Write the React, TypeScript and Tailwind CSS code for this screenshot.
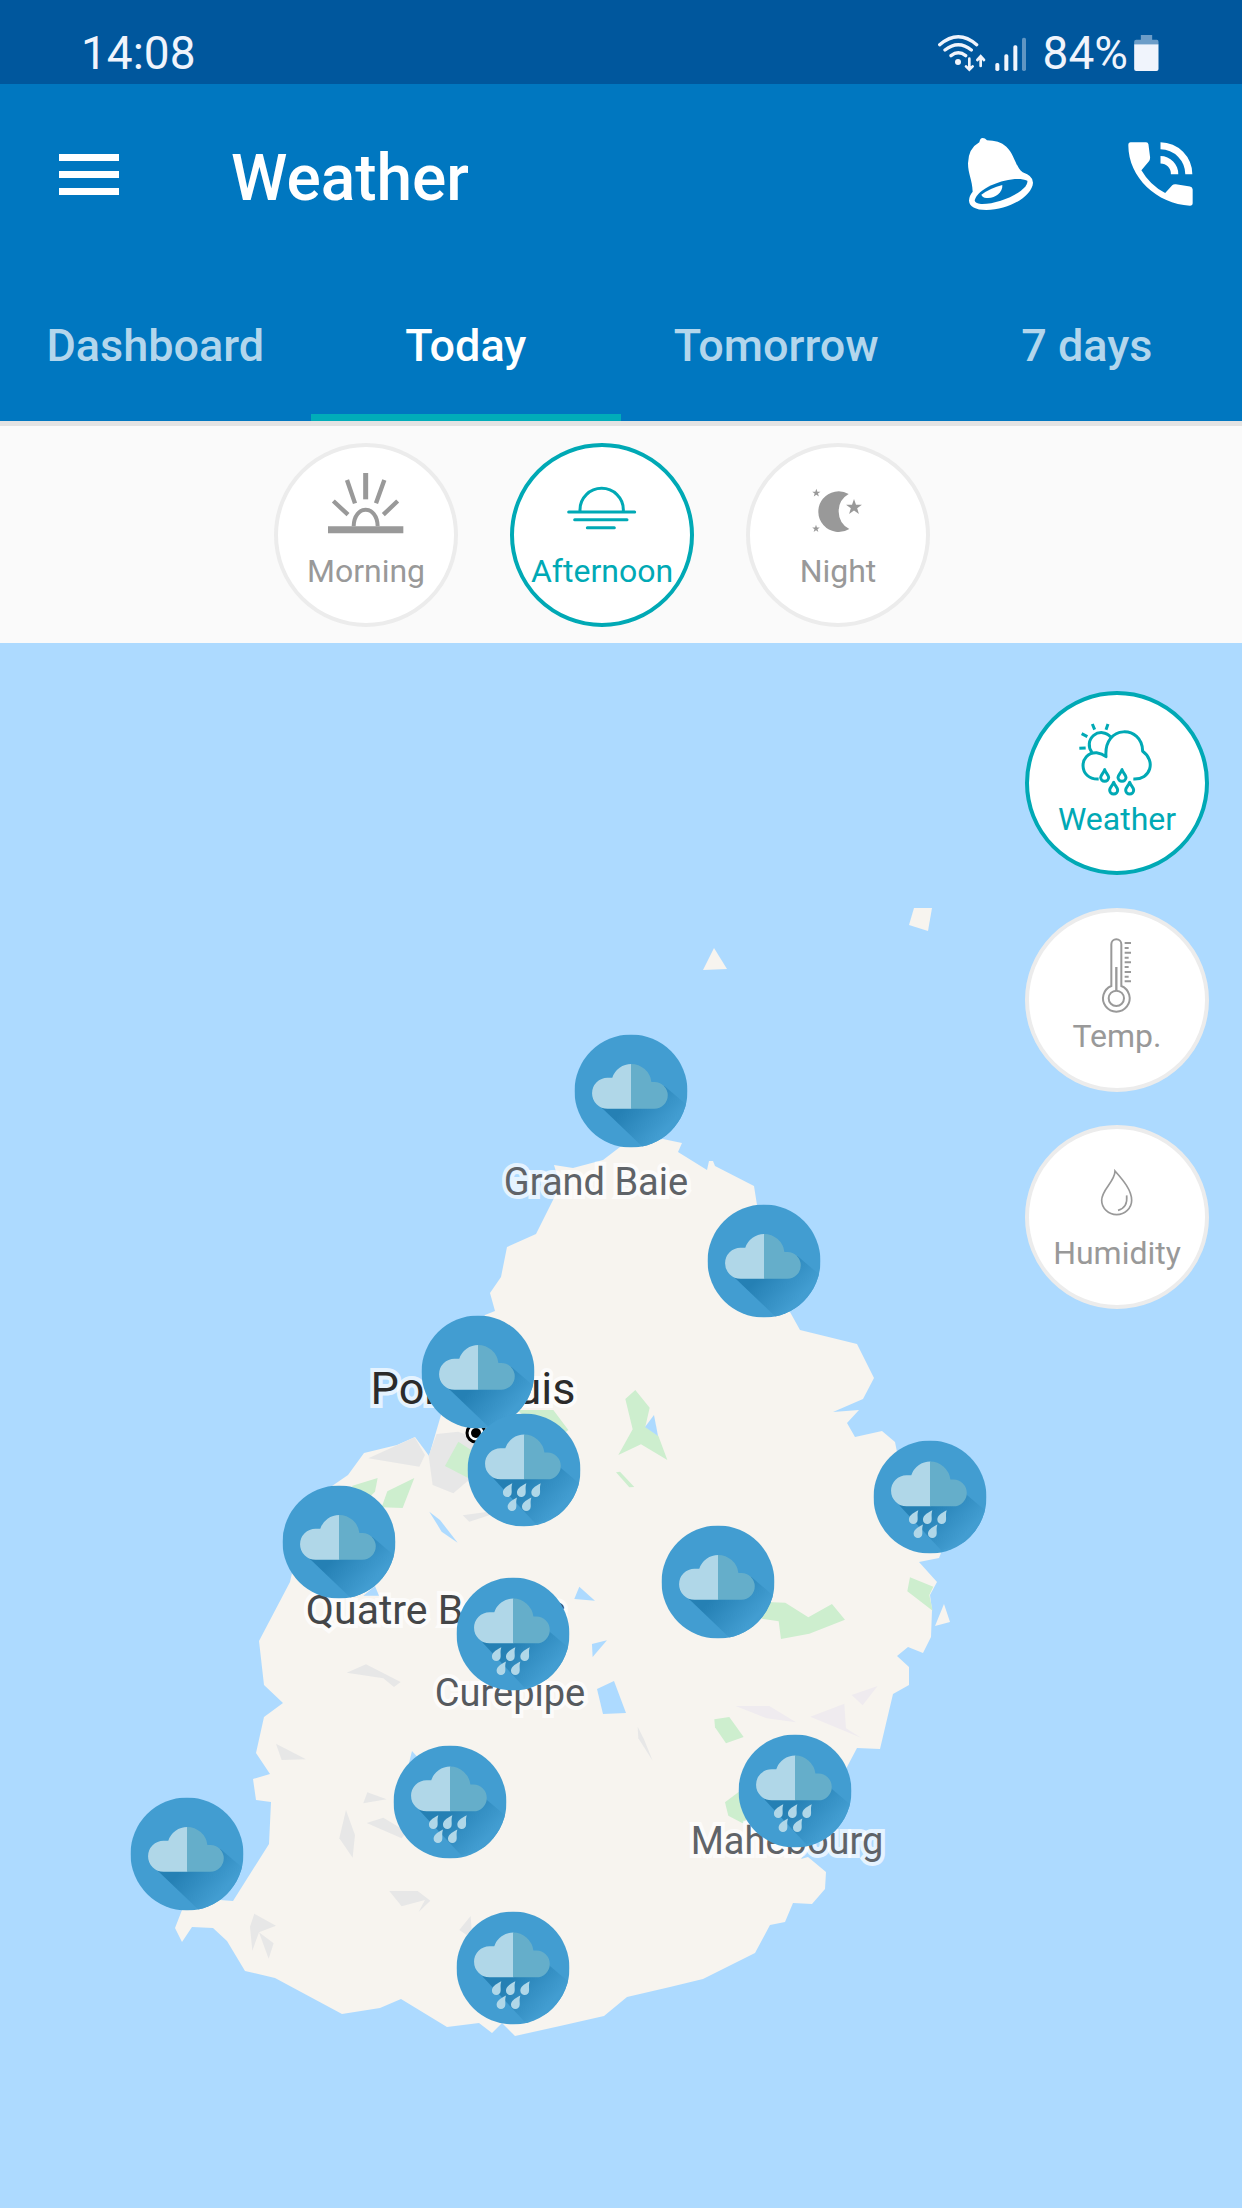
import { useState } from "react";
import type { ReactNode } from "react";
import clsx from "clsx";

type Place = { name: string; x: number; y: number; className: string };
type Pin = { id: string; x: number; y: number; rain?: boolean };

const MAP_WIDTH = 1242;
const MAP_HEIGHT = 1565;
const MAP_TOP = 643;

const tabs = ["Dashboard", "Today", "Tomorrow", "7 days"];

const places: Place[] = [
  { name: "Grand Baie", x: 596, y: 1182, className: "text-[38px] text-[#5f6368]" },
  { name: "Port Louis", x: 473, y: 1388, className: "text-[45px] text-[#2b2b2b]" },
  { name: "Quatre Bornes", x: 436, y: 1610, className: "text-[41px] text-[#444648]" },
  { name: "Curepipe", x: 510, y: 1693, className: "text-[38px] text-[#565a5f]" },
  { name: "Mahebourg", x: 787, y: 1841, className: "text-[38px] text-[#5f6368]" },
];

const pins: Pin[] = [
  { id: "grand-baie", x: 631, y: 1091 },
  { id: "north-east", x: 764, y: 1261 },
  { id: "port-louis", x: 478, y: 1372 },
  { id: "moka", x: 524, y: 1470, rain: true },
  { id: "flic-en-flac", x: 339, y: 1542 },
  { id: "quatre-bornes", x: 513, y: 1634, rain: true },
  { id: "east-coast", x: 930, y: 1497, rain: true },
  { id: "centre", x: 718, y: 1582 },
  { id: "le-morne", x: 187, y: 1854 },
  { id: "plaine-champagne", x: 450, y: 1802, rain: true },
  { id: "souillac", x: 513, y: 1968, rain: true },
  { id: "mahebourg", x: 795, y: 1791, rain: true },
];

function place(x: number, y: number) {
  return {
    left: `${(x / MAP_WIDTH) * 100}%`,
    top: `${((y - MAP_TOP) / MAP_HEIGHT) * 100}%`,
  };
}

const STAR = "0,-10 2.4,-3.1 9.5,-3.1 3.8,1.2 5.9,8.1 0,3.9 -5.9,8.1 -3.8,1.2 -9.5,-3.1 -2.4,-3.1";

function ChipIcon({ viewBox, children }: { viewBox: string; children: ReactNode }) {
  return (
    <svg
      viewBox={viewBox}
      className="h-[88px] w-[96px] shrink-0"
      fill="none"
      stroke="currentColor"
      aria-hidden="true"
    >
      {children}
    </svg>
  );
}

function MorningIcon() {
  return (
    <ChipIcon viewBox="172 164 288 264">
      <path d="M202 358H428" strokeWidth="21" />
      <path d="M279 348C280 282 350 282 351 348" strokeWidth="12" />
      <path d="M315 188V267" strokeWidth="15" />
      <path d="M259 209L283 279M371 209L346 279M218 272L262 313M411 272L368 313" strokeWidth="13" />
    </ChipIcon>
  );
}

function AfternoonIcon() {
  return (
    <ChipIcon viewBox="880 164 288 264">
      <path
        d="M958 303V298A65 64 0 0 1 1088 298V303M924 305H1122M942 328H1099M980 352H1061"
        strokeWidth="9"
        strokeLinecap="round"
      />
    </ChipIcon>
  );
}

function NightIcon() {
  return (
    <ChipIcon viewBox="450 164 288 264">
      <g fill="currentColor" stroke="none">
        <path d="M626 251A61 61 0 1 0 628 356A60 60 0 0 1 626 251Z" />
        <polygon points={STAR} transform="translate(642 291) scale(2.5)" />
        <polygon points={STAR} transform="translate(529 248) scale(1.3)" />
        <polygon points={STAR} transform="translate(528 355) scale(1.2)" />
      </g>
    </ChipIcon>
  );
}

function WeatherIcon() {
  const drops = [
    [316, 348],
    [368, 348],
    [343, 386],
    [391, 386],
  ];

  return (
    <ChipIcon viewBox="209 159 288 264">
      <g strokeWidth="9" strokeLinejoin="round">
        <path d="M278 277A36 36 0 1 1 334 231" />
        <path d="M279 192L286 209M326 192L320 209M247 221L264 230M240 265L259 264" />
        <path d="M298 357C236 360 237 276 292 278Q308 280 320 290C312 192 430 195 430 274C470 302 455 360 402 357" />
        {drops.map(([x, y]) => (
          <path
            key={`${x}-${y}`}
            d="M0 -19C-4 -8 -12 -3 -12 4A12 12 0 0 0 12 4C12 -3 4 -8 0 -19Z"
            transform={`translate(${x} ${y})`}
          />
        ))}
      </g>
    </ChipIcon>
  );
}

function TemperatureIcon() {
  return (
    <ChipIcon viewBox="209 809 288 264">
      <g strokeWidth="6">
        <path d="M336 977V852A15 15 0 0 1 366 852V977A40 40 0 1 1 336 977Z" />
        <circle cx="351" cy="1014" r="23" />
        <path d="M351 920V991" strokeWidth="7" />
        <path d="M376 848H395M376 877H395M376 906H395M376 935H395M376 963H395" />
        <path d="M376 863H388M376 892H388M376 920H388M376 949H388" />
      </g>
    </ChipIcon>
  );
}

function HumidityIcon() {
  return (
    <ChipIcon viewBox="209 498 288 264">
      <path
        d="M347 570C347 602 307 625 307 658A45 43 0 0 0 397 658C397 628 372 598 347 570ZM382 643Q386 680 356 688"
        strokeWidth="5"
      />
    </ChipIcon>
  );
}

const periods = [
  { label: "Morning", icon: <MorningIcon /> },
  { label: "Afternoon", icon: <AfternoonIcon /> },
  { label: "Night", icon: <NightIcon /> },
];

const layers = [
  { label: "Weather", icon: <WeatherIcon /> },
  { label: "Temp.", icon: <TemperatureIcon /> },
  { label: "Humidity", icon: <HumidityIcon /> },
];

type ChipProps = {
  label: string;
  icon: ReactNode;
  active: boolean;
  onClick: () => void;
};

function Chip({ label, icon, active, onClick }: ChipProps) {
  return (
    <button
      type="button"
      aria-pressed={active}
      onClick={onClick}
      className={clsx(
        "flex h-[184px] w-[184px] flex-col items-center rounded-full border-4 bg-white pt-[18px]",
        active ? "border-[#00a9b5] text-[#00a9b5]" : "border-[#ececec] text-[#999999]"
      )}
    >
      {icon}
      <span className="text-[32px] leading-9">{label}</span>
    </button>
  );
}

function StatusBar() {
  return (
    <div className="flex h-[84px] items-center justify-between bg-[#00579d] pt-[22px] pr-[83px] pl-[81px] text-[46px] leading-none text-[#f0f4fc]">
      <span>14:08</span>
      <div className="flex items-center">
        <svg viewBox="114 94 276 114" className="h-[38px] w-[92px]" fill="none" stroke="currentColor" aria-hidden="true">
          <g strokeWidth="10" strokeLinecap="round">
            <path d="M122 126Q178 78 233 126M138 142Q178 110 217 142M156 159Q178 142 200 159" />
            <path d="M211 168V200M201 191L211 201L221 191M245 190V161M235 172L245 161L255 172" strokeWidth="8" />
          </g>
          <g fill="currentColor" stroke="none">
            <circle cx="177" cy="178" r="9" />
            <rect x="289" y="181" width="12" height="24" rx="5" />
            <rect x="316" y="155" width="12" height="50" rx="5" />
            <rect x="343" y="128" width="12" height="77" rx="5" />
            <rect x="369" y="105" width="12" height="100" rx="5" opacity="0.4" />
          </g>
        </svg>
        <span className="ml-3.5">84%</span>
        <svg viewBox="704 95 74 114" className="ml-1.5 h-[38px] w-[25px]" fill="currentColor" aria-hidden="true">
          <path d="M724 98H758V112H772Q777 112 777 118V126H704V118Q704 112 710 112H724Z" opacity="0.45" />
          <path d="M704 126H777V200Q777 206 771 206H710Q704 206 704 200Z" />
        </svg>
      </div>
    </div>
  );
}

function BellIcon() {
  return (
    <svg viewBox="204 411 201 222" className="h-[74px] w-[67px]" aria-hidden="true">
      <path
        d="M251 414Q258 414 264 421Q300 421 322 440C346 462 350 502 371 517Q402 527 402 548C400 588 330 630 262 630Q212 629 210 602Q210 588 221 575C220 540 207 522 207 490Q208 445 241 427Q243 414 251 414Z"
        fill="#fff"
      />
      <path d="M227 601C238 558 345 524 385 542C390 572 300 614 246 612Q228 611 227 601Z" fill="#0077c0" />
      <path d="M247 584Q275 564 310 555C312 578 286 597 262 594Q250 592 247 584Z" fill="#fff" />
    </svg>
  );
}

function PhoneIcon() {
  return (
    <svg viewBox="684 426 194 191" className="h-[64px] w-[65px]" fill="#fff" aria-hidden="true">
      <path d="M692 427H738Q744 427 745 433L750 472Q750 479 746 484L724 510Q750 555 795 578L816 555Q820 551 827 552L869 559Q877 561 877 568V608Q877 616 869 616C770 612 684 530 685 435Q685 427 692 427Z" />
      <path d="M781 427A96 95 0 0 1 876 522H855A74 74 0 0 0 781 448Z" />
      <path d="M781 468A53 53 0 0 1 834 522H812A31 31 0 0 0 781 490Z" />
    </svg>
  );
}

function WeatherPin({ pin }: { pin: Pin }) {
  const drops = [
    [-49, 62],
    [-7, 62],
    [36, 62],
    [-35, 104],
    [8, 104],
  ];
  const clip = `clip-${pin.id}`;
  const shade = `shade-${pin.id}`;

  return (
    <button
      type="button"
      aria-label={pin.rain ? "Rain" : "Cloudy"}
      style={place(pin.x, pin.y)}
      className="absolute size-[113px] -translate-x-1/2 -translate-y-1/2 rounded-full"
    >
      <svg viewBox="-169 -169 338 338" className="size-full">
        <defs>
          <clipPath id={clip}>
            <circle r="169" />
          </clipPath>
          <linearGradient id={shade} gradientUnits="userSpaceOnUse" x1="-10" y1="40" x2="90" y2="130">
            <stop offset="0" stopColor="#2580b4" />
            <stop offset="1" stopColor="#429dd1" />
          </linearGradient>
        </defs>
        <circle r="169" fill="#429dd1" />
        <g clipPath={`url(#${clip})`}>
          <path
            d={pin.rain ? "M-92 25L34 160L120 130L172 46L100 -15Z" : "M-90 48L36 168L120 150L172 46L100 -15Z"}
            fill={`url(#${shade})`}
          />
        </g>
        <g transform={pin.rain ? "translate(0 -25)" : undefined}>
          <path d="M1 -81V53H-70A46 46 0 0 1 -70 -40H-56A60 60 0 0 1 1 -81Z" fill="#b0d7e8" />
          <path d="M0 -81A61 61 0 0 1 61 -27H70A40 40 0 0 1 70 53H0Z" fill="#65aeca" />
        </g>
        {pin.rain &&
          drops.map(([x, y]) => (
            <path
              key={`${x}-${y}`}
              d="M14 -22C-6 -12 -14 -4 -14 6A13 13 0 0 0 12 6C13 -2 10 -8 14 -22Z"
              transform={`translate(${x} ${y})`}
              fill="#b0d7e8"
            />
          ))}
      </svg>
    </button>
  );
}

function IslandMap() {
  return (
    <svg viewBox="0 643 1242 1565" className="block h-full w-full" aria-hidden="true">
      {/* coast line and islets */}
      <g fill="#f7f4ef">
        <polygon points="663,1139 682,1143 678,1152 707,1170 709,1161 713,1161 715,1166 754,1186 757,1205 790,1312 800,1330 857,1344 874,1378 863,1399 833,1412 859,1410 847,1423 855,1437 882,1431 895,1442 897,1452 941,1553 939,1558 919,1562 937,1582 930,1595 932,1610 931,1637 923,1653 908,1647 897,1656 909,1667 909,1685 893,1694 880,1749 857,1748 847,1767 822,1830 801,1859 808,1857 826,1872 825,1889 812,1904 793,1903 785,1922 770,1925 755,1953 703,1979 670,1987 627,1997 604,2016 560,2026 515,2036 502,2023 492,2033 479,2023 447,2027 401,1999 380,2008 342,2014 275,1978 245,1971 227,1941 213,1928 192,1927 182,1942 175,1928 182,1910 220,1900 233,1901 269,1844 271,1802 256,1800 253,1779 270,1774 256,1753 264,1717 283,1703 264,1685 259,1641 290,1582 292,1573 332,1486 348,1475 364,1453 397,1445 415,1437 424,1449 429,1456 441,1415 485,1315 495,1311 490,1293 501,1277 507,1247 536,1234 553,1200 560,1185 554,1165 573,1168 603,1160 620,1147" />
        <polygon points="703,970 714,948 727,969" />
        <polygon points="914,908 932,908 928,931 909,925" />
        <polygon points="944,1604 950,1622 935,1626" />
      </g>

      {/* built-up and bare ground */}
      <g fill="#e7e7e7">
        <g transform="translate(240 1280) scale(0.3333)">
          <polygon points="385,535 524,472 555,525 538,560" />
          <polygon points="590,462 655,455 720,480 690,597 640,640 578,615 566,528" />
          <polygon points="668,706 745,695 750,705 688,725" />
          <polygon points="320,1178 378,1153 482,1206 462,1221 430,1195" />
        </g>
        <g transform="translate(120 1640) scale(0.3333)">
          <polygon points="468,311 558,358 485,360" />
          <polygon points="742,457 800,478 730,490" />
          <polygon points="678,510 705,585 698,653 658,595" />
          <polygon points="740,549 790,533 860,575 845,595" />
          <polygon points="808,753 893,753 931,782 896,816 915,780 845,799" />
          <polygon points="403,821 468,857 417,877 397,932 390,860" />
          <polygon points="417,877 461,910 446,956" />
          <polygon points="1052,828 1055,870 1040,885 1018,870" />
        </g>
        <g transform="translate(560 1640) scale(0.3333)">
          <polygon points="233,260 252,298 278,362 235,295" />
          <g fill="#efebef">
            <polygon points="527,198 628,198 708,247 620,235" />
            <polygon points="751,230 853,191 858,265 903,293" />
            <polygon points="875,165 953,138 908,196" />
          </g>
        </g>
      </g>

      {/* parks */}
      <g fill="#cdeece">
        <g transform="translate(600 1280) scale(0.3333)">
          <polygon points="106,330 149,383 136,440 175,467 202,540 123,493 55,525 98,448 76,357" />
          <polygon points="48,577 60,575 103,621 88,622" />
          <polygon points="500,966 556,968 625,1012 696,972 735,1019 628,1061 543,1077 536,1024 485,1016" />
          <polygon points="930,892 1000,920 988,945 998,992 922,934" />
        </g>
        <g transform="translate(240 1280) scale(0.3333)">
          <polygon points="830,390 940,390 985,450 950,480" />
          <polygon points="655,485 615,558 690,597 740,540" />
          <polygon points="413,594 405,635 380,660 335,618" />
          <polygon points="523,594 442,634 425,682 488,684" />
        </g>
        <g transform="translate(560 1640) scale(0.3333)">
          <polygon points="463,238 508,231 551,291 498,310 465,262" />
          <polygon points="537,455 495,487 505,527 548,550 600,500" />
        </g>
      </g>

      {/* lakes */}
      <g fill="#addaff">
        <g transform="translate(240 1280) scale(0.3333)">
          <polygon points="568,695 600,720 653,788 605,755" />
          <polygon points="1018,920 1065,962 1003,957" />
          <polygon points="1056,1092 1101,1081 1058,1131" />
          <polygon points="405,918 417,947 370,947" />
        </g>
        <polygon points="654,1415 645,1427 658,1436" />
        <polygon points="597,1689 614,1681 626,1713 603,1714" />
        <polygon points="412,1751 420,1760 409,1763" />
      </g>

      <circle cx="476" cy="1433" r="9" fill="#fff" stroke="#000" strokeWidth="3" />
      <circle cx="476" cy="1433" r="5" fill="#000" />
    </svg>
  );
}

export default function App() {
  const [tab, setTab] = useState("Today");
  const [period, setPeriod] = useState("Afternoon");
  const [layer, setLayer] = useState("Weather");

  return (
    <div className="min-h-screen bg-[#addaff] font-[Roboto,sans-serif]">
      <StatusBar />

      <header className="bg-[#0077c0]">
        <div className="flex h-[194px] items-center pr-[49px] pb-3.5 pl-[59px] text-white">
          <button type="button" aria-label="Menu" className="flex w-[60px] flex-col gap-2.5">
            <span className="h-[7px] w-full bg-white" />
            <span className="h-[7px] w-full bg-white" />
            <span className="h-[7px] w-full bg-white" />
          </button>
          <h1 className="ml-28 pt-2.5 text-[64px] leading-none font-medium">Weather</h1>
          <button type="button" aria-label="Alerts" className="ml-auto">
            <BellIcon />
          </button>
          <button type="button" aria-label="Call" className="ml-[94px]">
            <PhoneIcon />
          </button>
        </div>

        <nav className="grid grid-cols-4">
          {tabs.map((name) => (
            <button
              key={name}
              type="button"
              onClick={() => setTab(name)}
              className={clsx(
                "h-[143px] border-b-7 text-[45px] font-medium",
                name === tab ? "border-[#00adb9] text-white" : "border-transparent text-[#b3d6ec]"
              )}
            >
              {name}
            </button>
          ))}
        </nav>
      </header>

      <div className="flex justify-center gap-[52px] border-t-5 border-[#e3e3e3] bg-[#fafafa] pt-[17px] pr-[38px] pb-4">
        {periods.map((item) => (
          <Chip
            key={item.label}
            label={item.label}
            icon={item.icon}
            active={item.label === period}
            onClick={() => setPeriod(item.label)}
          />
        ))}
      </div>

      <main className="relative aspect-[1242/1565] w-full overflow-hidden">
        <IslandMap />

        {places.map((item) => (
          <span
            key={item.name}
            style={place(item.x, item.y)}
            className={clsx(
              "absolute -translate-x-1/2 -translate-y-1/2 leading-none whitespace-nowrap [paint-order:stroke_fill] [-webkit-text-stroke:8px_rgb(255_255_255/0.7)]",
              item.className
            )}
          >
            {item.name}
          </span>
        ))}

        {pins.map((pin) => (
          <WeatherPin key={pin.id} pin={pin} />
        ))}

        <div className="absolute top-12 right-[33px] flex flex-col gap-[33px]">
          {layers.map((item) => (
            <Chip
              key={item.label}
              label={item.label}
              icon={item.icon}
              active={item.label === layer}
              onClick={() => setLayer(item.label)}
            />
          ))}
        </div>
      </main>
    </div>
  );
}
